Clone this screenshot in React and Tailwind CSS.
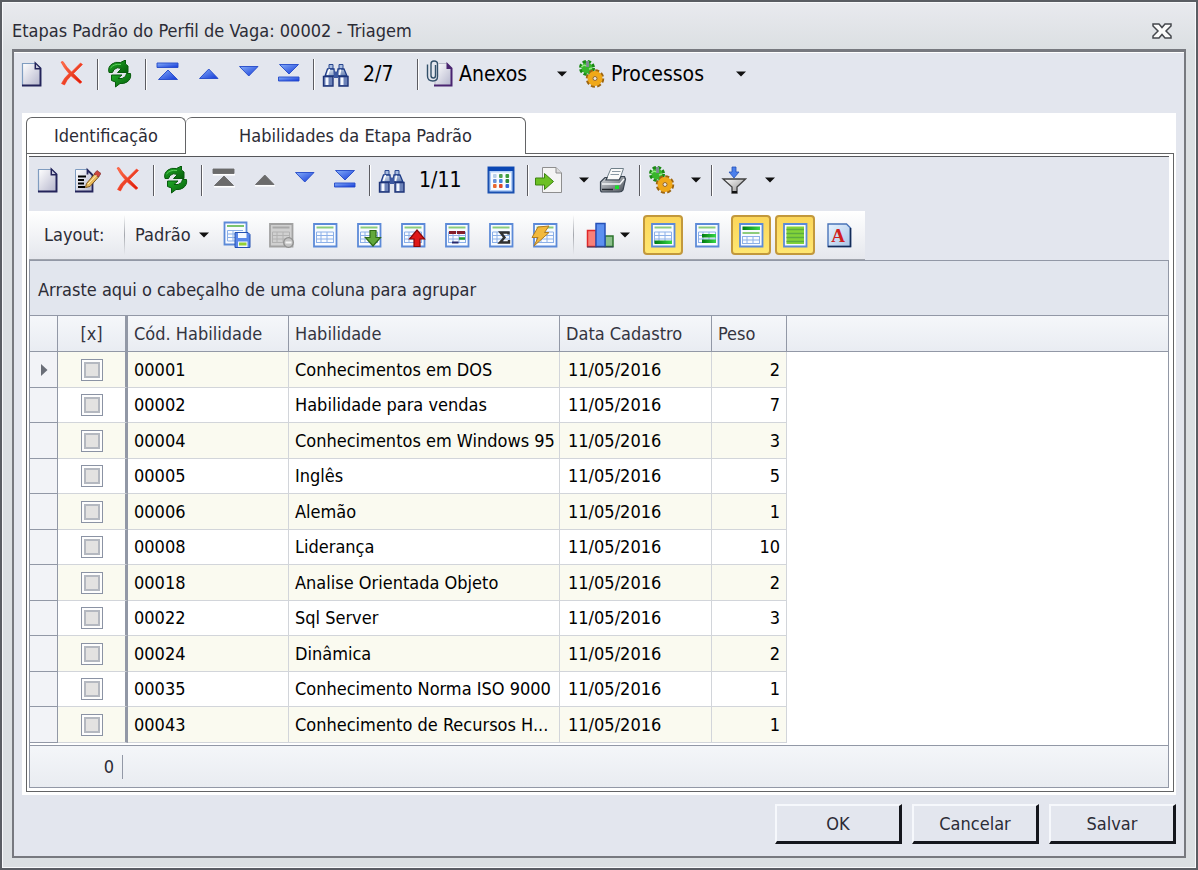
import { useState } from 'react';

const rows = [
  { code: '00001', name: 'Conhecimentos em DOS', date: '11/05/2016', weight: 2 },
  { code: '00002', name: 'Habilidade para vendas', date: '11/05/2016', weight: 7 },
  { code: '00004', name: 'Conhecimentos em Windows 95', date: '11/05/2016', weight: 3 },
  { code: '00005', name: 'Inglês', date: '11/05/2016', weight: 5 },
  { code: '00006', name: 'Alemão', date: '11/05/2016', weight: 1 },
  { code: '00008', name: 'Liderança', date: '11/05/2016', weight: 10 },
  { code: '00018', name: 'Analise Orientada Objeto', date: '11/05/2016', weight: 2 },
  { code: '00022', name: 'Sql Server', date: '11/05/2016', weight: 3 },
  { code: '00024', name: 'Dinâmica', date: '11/05/2016', weight: 2 },
  { code: '00035', name: 'Conhecimento Norma ISO 9000', date: '11/05/2016', weight: 1 },
  { code: '00043', name: 'Conhecimento de Recursos H...', date: '11/05/2016', weight: 1 },
];

/* Gradients shared by the icons */
function IconDefs() {
  const grads = [
    ['gBlue', '#86aef8', '#1238d8'],
    ['gPage', '#ffffff', '#b4b5cc'],
    ['gRed', '#ff7a50', '#d81000'],
    ['gSteel', '#e8f0fa', '#5c76aa'],
    ['gPrinter', '#d8dce0', '#4a5058'],
    ['gFunnel', '#ffffff', '#8a8a8a'],
    ['gLetter', '#e8f4ff', '#a9c4e6'],
    ['gGreen', '#1fae28', '#065c0a'],
  ];
  return (
    <svg className="absolute size-0" aria-hidden="true">
      <defs>
        {grads.map(([id, a, b]) => (
          <linearGradient key={id} id={id} x1="0" y1="0" x2="1" y2="1">
            <stop offset="0" stopColor={a} />
            <stop offset="1" stopColor={b} />
          </linearGradient>
        ))}
        <linearGradient id="gBar" x1="0" x2="1">
          <stop offset="0" stopColor="#007a10" />
          <stop offset="1" stopColor="#38d848" />
        </linearGradient>
      </defs>
    </svg>
  );
}

function Icon({ children }) {
  return (
    <svg viewBox="0 0 28 28" className="size-7 shrink-0" aria-hidden="true">
      {children}
    </svg>
  );
}

function NewIcon() {
  return (
    <Icon>
      <path d="M5.500 3.500H18.500L23.500 8V25.500H5.500Z" fill="url(#gPage)" stroke="#7f9cc0" strokeWidth="1.200" />
      <path d="M5 25.500H23.500V8.500L18.500 3.500V8.500H23" fill="none" stroke="#24245a" strokeWidth="1.900" />
      <path d="M19 4.500L22.500 8H19Z" fill="#c8cadc" />
    </Icon>
  );
}

function EditIcon() {
  return (
    <Icon>
      <path d="M2.500 3.500H14L19.500 8V25.500H2.500Z" fill="url(#gPage)" stroke="#7f9cc0" />
      <path d="M2 25.500H19.500V9L14.500 4V8.500" fill="none" stroke="#24245a" strokeWidth="1.800" />
      <path d="M5 10.500H13M5 14H11M5 17.500H11M5 21H12" stroke="#000" strokeWidth="1.800" />
      <path d="M13.500 17.500L22 7.500L26 10.500L17 20.500L12.500 21.500Z" fill="#e9b95a" stroke="#7a5520" />
      <path d="M21 8L24 4.500L28 7.500L25.500 11Z" fill="#d0453c" stroke="#7a3030" strokeWidth=".7" />
      <path d="M15 18L23.500 9" stroke="#fff2b8" />
    </Icon>
  );
}

function DeleteIcon() {
  return (
    <Icon>
      <path d="M4 2L6 1.500Q9.500 7.500 14.500 12L23.500 3L25.500 4.500L16.500 13.500L25 22L23 23.500L14 15.800Q9.500 20 7.500 25L4.500 23.500Q7 18 12 13.600Q7 8 4 2Z" fill="url(#gRed)" stroke="#ff3a20" strokeWidth=".6" />
    </Icon>
  );
}

function RefreshIcon() {
  return (
    <Icon>
      <path d="M4 12.500Q2.500 7 7 4Q10 1.500 15.500 2.500L20.500 0V4L23 6V12.500H12.500L16.500 8.500Q12 6.500 9 9.500L7.500 12.500Z" fill="url(#gGreen)" stroke="#075a0c" />
      <path d="M25.500 13.500Q26.500 19 22 22Q19 24 15 23.500L10.500 27V22L6.500 20.500V15H17L13 18.500Q17.500 19.500 20.500 16.500L21.500 13.500Z" fill="url(#gGreen)" stroke="#075a0c" />
      <path d="M5.500 8Q9 3.500 16 4.500" stroke="#5cd05c" fill="none" />
    </Icon>
  );
}

function ArrowIcon({ down, bar, disabled }) {
  const fill = disabled ? '#6b6b6b' : 'url(#gBlue)';
  const line = disabled ? '#6b6b6b' : '#2348c8';
  const shapes = down
    ? [bar ? 'M6.500 4.500H25.500L16 14Z' : 'M6.500 6.500H25L15.800 16Z', 'M5.500 17H26V21H5.500Z']
    : [bar ? 'M15 10L24.500 19.500H5.500Z' : 'M15.800 9L25 18.500H6.500Z', 'M4 3H25V7.500H4Z'];
  return (
    <Icon>
      {disabled && (
        <path d={bar ? 'M5 20.800H26M4 8.800H26' : 'M6 19.800H26'} stroke="#fff" strokeWidth="1.500" />
      )}
      <path d={shapes[0]} fill={fill} stroke={line} strokeWidth=".9" />
      {bar && <path d={shapes[1]} fill={fill} stroke={line} strokeWidth=".9" />}
    </Icon>
  );
}

function BinocularsIcon() {
  return (
    <Icon>
      <path d="M8 4.500H12V9H8ZM18 4.500H22V9H18Z" fill="#a8bce0" stroke="#2a4890" />
      <path d="M6.500 9H13L13.500 16H4ZM17 9H23L26 16H16Z" fill="url(#gSteel)" stroke="#1e3c88" strokeWidth="1.300" />
      <path d="M2.500 16.500H12V26H2.500ZM18 16.500H27V26H18Z" fill="#6c82b8" stroke="#1e3478" strokeWidth="1.400" />
      <path d="M6 17.500V25M21 17.500V25" stroke="#f4f8ff" strokeWidth="3" />
      <path d="M13 11.500H17V18H13Z" fill="#3c58a0" />
      <path d="M8.500 9L6.500 15M19.500 9.500L18.500 15" stroke="#fff" strokeWidth="1.500" />
    </Icon>
  );
}

function AttachIcon() {
  return (
    <Icon>
      <path d="M13.500 3.500H22L26.500 8V25.500H10V20" fill="url(#gPage)" stroke="#b8bac8" />
      <path d="M9 25.500H26.500V8.500L22.500 4.500V8H26" fill="none" stroke="#4a2470" strokeWidth="2" />
      <path d="M10.500 5V15.500Q10.500 18 8.500 18Q6 18 6 15.500V4Q6 1 9 1Q12.500 1 12.500 4V16.500Q12.500 21 8 21Q2.500 21 2.500 16V4.500" fill="none" stroke="#33506a" strokeWidth="1.400" />
    </Icon>
  );
}

function GearsIcon() {
  return (
    <Icon>
      <circle cx="10" cy="8" r="6" fill="none" stroke="#1a8a14" strokeWidth="4" strokeDasharray="3 1.710" />
      <circle cx="10" cy="8" r="5.500" fill="#38b52c" />
      <path d="M9 1H12V7H9Z" fill="#7c8c90" />
      <path d="M4.500 7Q7 4 9 6M12 9L15 8" stroke="#90ea80" fill="none" strokeWidth="1.500" />
      <circle cx="18" cy="18.500" r="7" fill="none" stroke="#9c6410" strokeWidth="4.500" strokeDasharray="3.500 2" />
      <circle cx="18" cy="18.500" r="5" fill="#c8a070" stroke="#f0a818" strokeWidth="5" />
      <circle cx="18" cy="18.500" r="2" fill="#e6e8ee" stroke="#a06a18" />
    </Icon>
  );
}

function CalendarIcon() {
  const dots = [
    [6, 8, '#b8d0e8'], [12, 8, '#50a050'], [18.5, 8, '#3c9c3c'],
    [6, 13, '#6890d8'], [12, 13, '#4888e0'], [18.5, 13, '#308838'],
    [6, 18, '#e86830'], [12, 18, '#e04828'], [18.5, 18, '#3868d8'],
  ];
  return (
    <Icon>
      <path d="M1.500 1.500H26.500V26.500H1.500Z" fill="#b4d0f8" stroke="#1a50b0" strokeWidth="2" />
      <path d="M1 1H27V5H1Z" fill="#0b47b4" />
      <path d="M4 6.500H24V24H4Z" fill="#f8fbff" />
      {dots.map(([x, y, c]) => (
        <rect key={`${x}-${y}`} x={x} y={y} width="3.600" height="4" rx="1" fill={c} />
      ))}
    </Icon>
  );
}

function ExportIcon() {
  return (
    <Icon>
      <path d="M7.500 1.500H21L26.500 7V26.500H7.500Z" fill="#f4f4f4" stroke="#8e8e8e" />
      <path d="M21 1.500V7H26.500" fill="#dcdcdc" stroke="#8e8e8e" />
      <path d="M.5 12H9.500V7.500L18.500 15.500L9.500 23.500V19H.5Z" fill="#6cc024" stroke="#3c8410" />
    </Icon>
  );
}

function PrinterIcon() {
  return (
    <Icon>
      <path d="M7 14L12 2.500H24.500L20.500 14Z" fill="#fafafa" stroke="#70808a" />
      <path d="M13 5.500H21.500M11.500 8.500H20" stroke="#8a98a4" />
      <path d="M1.500 16L6 11.500H8L7 14H20L22 10.500H25.500L26.500 13L24 24Q23 26 20 26H3.500Q1.500 26 1.500 24Z" fill="url(#gPrinter)" stroke="#3a4450" strokeWidth="1.200" />
      <path d="M3 18H21L25 13" fill="none" stroke="#f4f6f8" strokeWidth="1.500" />
      <path d="M3 23.500H14" stroke="#20262c" strokeWidth="1.500" />
      <path d="M16 19.500H20V23H16Z" fill="#18e028" />
    </Icon>
  );
}

function FilterIcon() {
  return (
    <Icon>
      <path d="M13 1H17V6H20L15 12L10 6H13Z" fill="#4c80ec" stroke="#2450b8" strokeWidth=".8" />
      <path d="M4 13H26.500L18 21V27H13V21Z" fill="url(#gFunnel)" stroke="#404040" strokeWidth="1.300" />
      <path d="M13 25H18V27H13Z" fill="#111" />
    </Icon>
  );
}

/* Small data-sheet glyph that most layout buttons build on */
function Sheet({ gray, plain, children }) {
  const edge = gray ? '#a2a2a2' : '#5c8ad8';
  const fill = gray ? '#d0d0d0' : '#f8fbff';
  return (
    <Icon>
      <path d="M3 3H25.500V25.500H3Z" fill={fill} stroke={edge} strokeWidth="1.800" />
      {!plain && (
        <>
          <path d="M5.500 6.500H22.500" stroke={gray ? '#a8a8a8' : '#8ccc7c'} strokeWidth="2" />
          <path d="M5.500 11H22.500M5.500 14.500H22.500M5.500 18H22.500M5.500 21.500H22.500M5.500 11V22M10 11V22M16 11V22M22.500 11V22" stroke={gray ? '#b2b2b2' : '#8cb0e8'} fill="none" />
        </>
      )}
      {children}
    </Icon>
  );
}

const layoutIcons = [
  ['Salvar layout', (
    <Icon>
      <path d="M1.500 1.500H23.500V23.500H1.500Z" fill="#f8fbff" stroke="#5c8ad8" strokeWidth="1.800" />
      <path d="M4 5H21" stroke="#7cc46c" strokeWidth="2" />
      <path d="M4.500 9.500H20M4.500 13H20M4.500 16.500H20M4.500 20H20M4.500 9.500V20M10 9.500V20" stroke="#8cb0e8" />
      <path d="M12 11.500H25L27 13.500V26.500H12Z" fill="#5a88ea" stroke="#2450b0" />
      <path d="M15 12H23.500V17H15ZM15 20.500H24.500V26H15Z" fill="#f4f8ff" />
      <path d="M16 23H23.500" stroke="#94d034" strokeWidth="3" />
    </Icon>
  )],
  ['Excluir layout', (
    <Sheet gray>
      <circle cx="21.500" cy="21.500" r="4.800" fill="#c4c4c4" stroke="#909090" strokeWidth="1.300" />
      <path d="M18.500 21.500H24.500" stroke="#f4f4f4" strokeWidth="2" />
    </Sheet>
  )],
  ['Nova tabela', <Sheet />],
  ['Importar', (
    <Sheet>
      <path d="M15 9.500H21V16.500H25.500L18 25L10.500 16.500H15Z" fill="#62a83c" stroke="#306c18" strokeWidth="1.200" />
    </Sheet>
  )],
  ['Exportar', (
    <Sheet>
      <path d="M15 25.500H21V18H25.500L18 9L10.500 18H15Z" fill="#e01818" stroke="#880808" strokeWidth="1.200" />
    </Sheet>
  )],
  ['Destaques', (
    <Sheet>
      <path d="M6 11.500H13M14 11.500H22" stroke="#84202c" strokeWidth="3" />
      <path d="M16 17.500H22" stroke="#20a030" strokeWidth="2.500" />
      <path d="M9 21.500H15.500" stroke="#28286c" strokeWidth="2" />
    </Sheet>
  )],
  ['Totais', (
    <Sheet>
      <path d="M21.500 13.500V11.500H13.500L17.500 16.500L13 21.500H22V19" fill="none" stroke="#303030" strokeWidth="2.400" />
    </Sheet>
  )],
  ['Atualizar layout', (
    <Sheet>
      <path d="M7 6L18 5L13.500 11.500H18L3 25L7 16.500H1Z" fill="#f2b93c" stroke="#b07c20" />
    </Sheet>
  )],
];

const toggleIcons = [
  ['Rodapé', true, <Sheet><rect x="5.500" y="19.500" width="17.500" height="3.500" fill="url(#gBar)" /></Sheet>],
  ['Agrupamento', false, <Sheet><rect x="9" y="13" width="14" height="3.500" fill="url(#gBar)" /><rect x="9" y="18.500" width="14" height="3.500" fill="url(#gBar)" /></Sheet>],
  ['Cabeçalho', true, (
    <Sheet plain>
      <rect x="5.500" y="5.500" width="17.500" height="3.500" fill="url(#gBar)" />
      <path d="M5.500 12H22.500" stroke="#8ccc7c" strokeWidth="2" />
      <path d="M5.500 15.500H22.500M5.500 19H22.500M5.500 22.500H22.500M5.500 15V23M10 15V23M16 15V23M22.500 15V23" stroke="#8cb0e8" />
    </Sheet>
  )],
  ['Linhas alternadas', true, (
    <Sheet plain>
      <rect x="5.500" y="5.500" width="17.500" height="17.500" fill="#84d438" />
      <path d="M5.500 8.500H23M5.500 12.500H23M5.500 16.500H23M5.500 20.500H23" stroke="#5cac40" strokeWidth="1.300" />
    </Sheet>
  )],
  ['Fonte', false, (
    <Icon>
      <path d="M3 3H21.500L25.500 7V25.500H3Z" fill="url(#gLetter)" stroke="#4a74b8" strokeWidth="1.400" />
      <path d="M3 25.500H25.500V7" fill="none" stroke="#142c58" strokeWidth="1.600" />
      <text x="13" y="21" textAnchor="middle" fontFamily="Liberation Serif, serif" fontWeight="700" fontSize="19" fill="#d02020">A</text>
    </Icon>
  )],
];

function Sep() {
  return <div className="mr-1.5 h-[31px] w-0.5 border-r border-l border-r-white border-l-[#5c5c62]"></div>;
}

function Caret() {
  return (
    <svg viewBox="0 0 10 6" className="h-1.5 w-2.5 shrink-0" aria-hidden="true">
      <path d="M0 .5H10L5 5.500Z" fill="#111" />
    </svg>
  );
}

function ToolButton({ label, children, disabled }) {
  return (
    <button type="button" title={label} aria-label={label} disabled={disabled} className="flex h-9 w-10 items-center">
      {children}
    </button>
  );
}

function MenuButton({ label }) {
  return (
    <button type="button" aria-label={label} className="flex h-9 w-4 items-center">
      <Caret />
    </button>
  );
}

function MainToolbar() {
  return (
    <div className="flex h-[61px] items-center pb-[17px] pl-[3px] text-[21px] text-black">
      <ToolButton label="Novo"><NewIcon /></ToolButton>
      <ToolButton label="Excluir"><DeleteIcon /></ToolButton>
      <Sep />
      <ToolButton label="Atualizar"><RefreshIcon /></ToolButton>
      <Sep />
      <ToolButton label="Primeiro"><ArrowIcon bar /></ToolButton>
      <ToolButton label="Anterior"><ArrowIcon /></ToolButton>
      <ToolButton label="Próximo"><ArrowIcon down /></ToolButton>
      <ToolButton label="Último"><ArrowIcon down bar /></ToolButton>
      <Sep />
      <ToolButton label="Localizar"><BinocularsIcon /></ToolButton>
      <span className="ml-0.5 w-[54px]">2/7</span>
      <Sep />
      <button type="button" className="flex h-9 w-[132px] items-center gap-1.5"><AttachIcon />Anexos</button>
      <MenuButton label="Opções de anexos" />
      <button type="button" className="ml-1 flex h-9 w-[159px] items-center gap-1.5"><GearsIcon />Processos</button>
      <MenuButton label="Opções de processos" />
    </div>
  );
}

function GridToolbar() {
  return (
    <div className="flex h-[53px] items-center pb-[9px] pl-1 text-[21px] text-black">
      <ToolButton label="Novo"><NewIcon /></ToolButton>
      <ToolButton label="Editar"><EditIcon /></ToolButton>
      <ToolButton label="Excluir"><DeleteIcon /></ToolButton>
      <Sep />
      <ToolButton label="Atualizar"><RefreshIcon /></ToolButton>
      <Sep />
      <ToolButton label="Primeiro" disabled><ArrowIcon bar disabled /></ToolButton>
      <ToolButton label="Anterior" disabled><ArrowIcon disabled /></ToolButton>
      <ToolButton label="Próximo"><ArrowIcon down /></ToolButton>
      <ToolButton label="Último"><ArrowIcon down bar /></ToolButton>
      <Sep />
      <ToolButton label="Localizar"><BinocularsIcon /></ToolButton>
      <span className="ml-0.5 w-[68px]">1/11</span>
      <ToolButton label="Colunas"><CalendarIcon /></ToolButton>
      <Sep />
      <ToolButton label="Exportar"><ExportIcon /></ToolButton>
      <div className="ml-1"><MenuButton label="Opções de exportação" /></div>
      <div className="ml-1"><ToolButton label="Imprimir"><PrinterIcon /></ToolButton></div>
      <Sep />
      <ToolButton label="Processos"><GearsIcon /></ToolButton>
      <div className="ml-1 w-5"><MenuButton label="Opções de processos" /></div>
      <Sep />
      <ToolButton label="Filtrar"><FilterIcon /></ToolButton>
      <div className="ml-1.5"><MenuButton label="Opções de filtro" /></div>
    </div>
  );
}

function LayoutToolbar() {
  const [pressed, setPressed] = useState(toggleIcons.map((t) => t[1]));
  const toggle = (i) => setPressed(pressed.map((p, n) => (n === i ? !p : p)));

  return (
    <div className="flex h-[49px] w-[836px] max-w-full items-center border-b border-[#a0a4ac] bg-linear-to-b from-white to-[#e5e7ed] pl-[15px]">
      <span className="w-20">Layout:</span>
      <div className="h-10 w-px bg-linear-to-b from-transparent via-[#a4a7ad] to-transparent"></div>
      <button type="button" className="ml-2.5 flex h-9 w-[80px] items-center gap-2">Padrão<Caret /></button>
      {layoutIcons.map(([label, icon]) => (
        <button key={label} type="button" title={label} aria-label={label} className="flex h-9 w-11 items-center justify-center">
          {icon}
        </button>
      ))}
      <div className="ml-1.5 h-10 w-px bg-linear-to-b from-transparent via-[#a4a7ad] to-transparent"></div>
      <button type="button" aria-label="Gráfico" className="ml-3 flex h-9 w-[57px] items-center gap-1.5">
        <Icon>
          <path d="M1.500 9.500H10V25.500H1.500Z" fill="#f88078" stroke="#e02828" strokeWidth="1.500" />
          <path d="M19 15H27V25.500H19Z" fill="#8cc08c" stroke="#2c742c" strokeWidth="1.500" />
          <path d="M10 2.500H19V25.500H10Z" fill="#5c90f0" stroke="#2450b8" strokeWidth="1.500" />
          <path d="M1 26H27.500" stroke="#303860" />
        </Icon>
        <Caret />
      </button>
      <div className="flex gap-1">
        {toggleIcons.map(([label, , icon], i) => (
          <button
            key={label}
            type="button"
            title={label}
            aria-label={label}
            aria-pressed={pressed[i]}
            onClick={() => toggle(i)}
            className={
              pressed[i]
                ? 'flex size-10 items-center justify-center rounded-sm border-2 border-[#c2983c] bg-linear-to-b from-[#fbd65a] to-[#ffe771]'
                : 'flex size-10 items-center justify-center rounded-sm border-2 border-transparent'
            }
          >
            {icon}
          </button>
        ))}
      </div>
    </div>
  );
}

function SkillsTable() {
  const head = 'h-9 border-r border-b border-[#9298a6] bg-linear-to-b from-[#f5f7fa] to-[#e9ecf2] font-normal text-[#34343f]';
  const cell = 'border-r border-b border-[#d2d5da]';

  return (
    <table className="w-full table-fixed border-separate border-spacing-0">
      <colgroup>
        <col className="w-7" />
        <col className="w-[70px]" />
        <col className="w-[161px]" />
        <col className="w-[271px]" />
        <col className="w-[152px]" />
        <col className="w-[75px]" />
        <col />
      </colgroup>
      <thead>
        <tr className="text-left">
          <th className={head} aria-label="Linha"></th>
          <th className={`${head} border-r-3 text-center`}>[x]</th>
          <th className={`${head} pl-1.5`}>Cód. Habilidade</th>
          <th className={`${head} pl-1.5`}>Habilidade</th>
          <th className={`${head} pl-1.5`}>Data Cadastro</th>
          <th className={`${head} pl-1.5`}>Peso</th>
          <td className={`${head} border-r-0`}></td>
        </tr>
      </thead>
      <tbody>
        {rows.map((row, i) => (
          <tr key={row.code} className="h-[35px] bg-white text-black odd:h-9 odd:bg-[#fafaf0]">
            <td className="border-r border-b border-[#9298a6] bg-[#f2f3f7]">
              {i === 0 && (
                <svg viewBox="0 0 8 14" className="mx-auto h-3.5 w-2" aria-label="Linha atual">
                  <path d="M1 1L7.500 7L1 13Z" fill="#6a6e78" />
                </svg>
              )}
            </td>
            <td className="border-r-3 border-b border-r-[#9298a6] border-b-[#d2d5da]">
              <input
                type="checkbox"
                aria-label={`Selecionar ${row.name}`}
                className="mx-auto block size-[22px] appearance-none border border-[#8b93a4] bg-[#e3e2e1] shadow-[inset_0_0_0_2px_#fdfdfd,inset_0_0_0_4px_#b4b8c0] checked:bg-[#4a6ea8]"
              />
            </td>
            <td className={`${cell} pl-1.5`}>{row.code}</td>
            <td className={`${cell} truncate pl-1.5`}>{row.name}</td>
            <td className={`${cell} pl-2`}>{row.date}</td>
            <td className={`${cell} pr-1.5 text-right`}>{row.weight}</td>
            <td className="bg-white"></td>
          </tr>
        ))}
      </tbody>
    </table>
  );
}

export default function App() {
  return (
    <div className="flex min-h-screen flex-col border-2 border-[#5a5d63] bg-linear-to-b from-[#e9eaef] to-[#dbdfe2] to-[48px] px-2.5 pb-2.5 font-['DejaVu_Sans_Condensed','Noto_Sans',sans-serif] text-lg leading-6 text-[#2c2c36] shadow-[inset_0_0_0_1px_#f8f9fb]">
      <IconDefs />
      <header className="flex h-[47px] items-center justify-between pt-2.5 pr-3.5">
        <h1>Etapas Padrão do Perfil de Vaga: 00002 - Triagem</h1>
        <button type="button" aria-label="Fechar">
          <svg viewBox="0 0 20 16" className="h-4 w-5" aria-hidden="true">
            <path d="M1 1H7L10 4.500L13 1H19V3L14 8L19 13V15H13L10 11.500L7 15H1V13L6 8L1 3Z" fill="#fafafa" stroke="#44474c" strokeWidth="1.500" />
          </svg>
        </button>
      </header>

      <main className="flex grow flex-col border-2 border-t-3 border-[#77797f] bg-[#e3e6ee] shadow-[inset_0_1px_0_#fff]">
        <MainToolbar />

        <div className="mr-2 ml-2 flex grow flex-col bg-white pt-1 pr-0.5 pb-[3px] pl-1">
          <div className="flex h-9" role="tablist">
            <button type="button" role="tab" aria-selected="false" className="w-40 rounded-t-md border border-b-0 border-[#636466] bg-white">
              Identificação
            </button>
            <button type="button" role="tab" aria-selected="true" className="z-10 -mb-px w-[340px] rounded-t-md border border-b-0 border-l-0 border-[#636466] bg-white">
              Habilidades da Etapa Padrão
            </button>
          </div>

          <section className="flex grow flex-col border border-[#636466] pt-0.5 pr-1 pb-[3px] pl-0.5">
            <div className="border-t border-[#55565a] bg-[#e3e6ee] pt-px">
              <GridToolbar />
              <LayoutToolbar />
            </div>

            <div className="flex grow flex-col border border-[#9298a6] bg-white">
              <p className="flex h-[55px] items-center border-b border-[#9298a6] bg-[#e2e6ee] pt-1 pl-2">
                Arraste aqui o cabeçalho de uma coluna para agrupar
              </p>
              <SkillsTable />
              <footer className="mt-auto flex h-[42px] items-center border-t border-[#9298a6] bg-linear-to-b from-[#f4f6f9] to-[#e9ecf1]">
                <span className="w-[93px] border-r border-[#9298a6] pr-2 text-right">0</span>
              </footer>
            </div>
          </section>
        </div>

        <div className="flex justify-end gap-2.5 pt-[9px] pr-2 pb-3">
          {['OK', 'Cancelar', 'Salvar'].map((label) => (
            <button
              key={label}
              type="button"
              className="h-10 w-[127px] border-t-2 border-r-3 border-b-3 border-l-2 border-t-[#f6f8fc] border-r-[#14161c] border-b-[#14161c] border-l-[#f6f8fc] bg-[#e3e6ee] active:bg-[#d6dae4]"
            >
              {label}
            </button>
          ))}
        </div>
      </main>
    </div>
  );
}
